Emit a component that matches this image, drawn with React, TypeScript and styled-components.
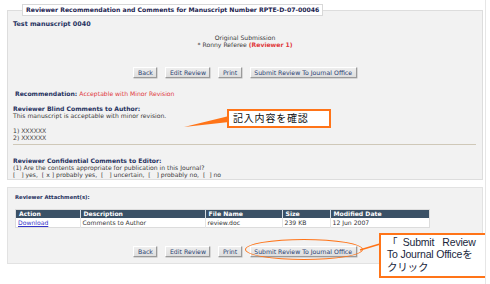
import React from "react";
import styled, { createGlobalStyle } from "styled-components";

const GlobalStyle = createGlobalStyle`
  html, body {
    margin: 0;
    padding: 0;
    background: #ffffff;
  }
  body {
    font-family: "DejaVu Sans", Verdana, sans-serif;
    color: #333333;
  }
`;

const Page = styled.div`
  position: relative;
  width: 485px;
  height: 284px;
  overflow: hidden;
  border-right: 1px solid #e6e6e6;
`;

const Panel = styled.fieldset`
  box-sizing: border-box;
  width: 476px;
  margin: 4px 0 0 7px;
  padding: 0 5px 1.5px 5px;
  border: 1px solid #dddddd;
  background: #f2f2f2;
  min-inline-size: auto;
`;

const Legend = styled.legend`
  margin-left: 9px;
  padding: 0 3px;
  border: 1px solid #d8d8d8;
  background: #ffffff;
  font-size: 6.15px;
  font-weight: bold;
  line-height: 10px;
  color: #1c2450;
`;

const Box = styled.div`
  box-sizing: border-box;
  width: 476px;
  margin: 7px 0 0 7px;
  padding: 5.5px 7px 6px 7px;
  border: 1px solid #e2e2e2;
  background: #f2f2f2;
`;

const Heading = styled.div<{ $top?: number; $indent?: number; $size?: number }>`
  margin-top: ${(p) => p.$top ?? 0}px;
  padding-left: ${(p) => p.$indent ?? 0}px;
  font-size: ${(p) => p.$size ?? 6.1}px;
  font-weight: bold;
  line-height: 7px;
  color: #1f3160;
  white-space: nowrap;
`;

const Text = styled.div<{ $top?: number; $center?: boolean }>`
  margin-top: ${(p) => p.$top ?? 0}px;
  font-size: 6.1px;
  line-height: 7px;
  color: #3a3a3a;
  text-align: ${(p) => (p.$center ? "center" : "left")};
  white-space: pre;
`;

const Red = styled.span`
  color: #e0383c;
  font-weight: normal;
`;

const RedBold = styled.span`
  color: #e0383c;
  font-weight: bold;
`;

const ButtonRow = styled.div<{ $top: number }>`
  display: flex;
  justify-content: center;
  gap: 8px;
  margin-top: ${(p) => p.$top}px;
`;

const Button = styled.button`
  box-sizing: border-box;
  height: 11px;
  padding: 0 3.5px;
  margin: 0;
  font-family: "DejaVu Sans", Verdana, sans-serif;
  font-size: 6.2px;
  line-height: 9px;
  color: #2b3f72;
  background: linear-gradient(#eeeeee, #dedede);
  border: 1px solid;
  border-color: #ffffff #9a9a9a #9a9a9a #ffffff;
  box-shadow: 0.5px 0.5px 0 #b8b8b8;
  white-space: nowrap;
`;

const Rule = styled.div`
  margin: 3.5px 1px 0 0;
  height: 1px;
  background: #cfc8b8;
`;

const Table = styled.table`
  margin-top: 8.5px;
  width: 415px;
  border-collapse: collapse;
  border: 1px solid #dcdcdc;
  font-size: 6.1px;
`;

const Th = styled.th<{ $w: number }>`
  width: ${(p) => p.$w}px;
  height: 8px;
  padding: 0 3px;
  background: #3b5166;
  color: #ffffff;
  font-weight: bold;
  text-align: left;
  line-height: 8px;
  border-left: 1px solid #d6dde4;
  &:first-child {
    border-left: none;
  }
`;

const Td = styled.td`
  height: 9px;
  padding: 0 2px;
  background: #ffffff;
  color: #333333;
  line-height: 9px;
  border-left: 1px solid #e4e4e4;
  &:first-child {
    border-left: none;
  }
`;

const Link = styled.a`
  color: #3434c8;
  text-decoration: underline;
`;

const Callout = styled.div<{ $x: number; $y: number; $w: number; $h: number }>`
  position: absolute;
  left: ${(p) => p.$x}px;
  top: ${(p) => p.$y}px;
  width: ${(p) => p.$w}px;
  height: ${(p) => p.$h}px;
  box-sizing: border-box;
  border: 2px solid #ff7418;
  background: #ffffff;
  color: #111111;
`;

const CheckNote = styled.div`
  padding-left: 4px;
  font-family: "Noto Sans CJK JP", sans-serif;
  font-size: 10px;
  letter-spacing: 0.8px;
  line-height: 14px;
`;

const ClickNote = styled.div`
  padding: 1px 0 0 6px;
  font-family: "Liberation Sans", "Noto Sans CJK JP", sans-serif;
  font-size: 10.5px;
  line-height: 12.3px;
  color: #1a1f3c;
  letter-spacing: -0.2px;
  white-space: pre;
`;

const Ring = styled.div`
  position: absolute;
  left: 245px;
  top: 239px;
  width: 118px;
  height: 21px;
  box-sizing: border-box;
  border: 1.5px solid #ff7418;
  border-radius: 50% / 50%;
`;

const Overlay = styled.svg`
  position: absolute;
  left: 0;
  top: 0;
  pointer-events: none;
`;

export default function App() {
  return (
    <>
      <GlobalStyle />
      <Page>
        <Panel>
          <Legend>Reviewer Recommendation and Comments for Manuscript Number RPTE-D-07-00046</Legend>
          <Heading $top={5} $size={6.4}>
            Test manuscript 0040
          </Heading>
          <Text $top={6} $center>
            Original Submission
          </Text>
          <Text $center>
            * Ronny Referee <RedBold>(Reviewer 1)</RedBold>
          </Text>
          <ButtonRow $top={19}>
            <Button>Back</Button>
            <Button>Edit Review</Button>
            <Button>Print</Button>
            <Button>Submit Review To Journal Office</Button>
          </ButtonRow>
          <Heading $top={12} $indent={2}>
            Recommendation: <Red>Acceptable with Minor Revision</Red>
          </Heading>
          <Heading $top={8}>Reviewer Blind Comments to Author:</Heading>
          <Text>This manuscript is acceptable with minor revision.</Text>
          <Text $top={7.5}>1) XXXXXX</Text>
          <Text>2) XXXXXX</Text>
          <Rule />
          <Heading $top={11.5}>Reviewer Confidential Comments to Editor:</Heading>
          <Text>(1) Are the contents appropriate for publication in this Journal?</Text>
          <Text>[   ] yes,  [ x ] probably yes,  [   ] uncertain,  [   ] probably no,  [  ] no</Text>
        </Panel>

        <Box>
          <Heading $size={5.3}>Reviewer Attachment(s):</Heading>
          <Table>
            <thead>
              <tr>
                <Th $w={62}>Action</Th>
                <Th $w={130}>Description</Th>
                <Th $w={76}>File Name</Th>
                <Th $w={45}>Size</Th>
                <Th $w={102}>Modified Date</Th>
              </tr>
            </thead>
            <tbody>
              <tr>
                <Td>
                  <Link href="#">Download</Link>
                </Td>
                <Td>Comments to Author</Td>
                <Td>review.doc</Td>
                <Td>239 KB</Td>
                <Td>12 Jun 2007</Td>
              </tr>
            </tbody>
          </Table>
          <ButtonRow $top={18}>
            <Button>Back</Button>
            <Button>Edit Review</Button>
            <Button>Print</Button>
            <Button>Submit Review To Journal Office</Button>
          </ButtonRow>
        </Box>

        <Overlay width="490" height="284" viewBox="0 0 490 284">
          <polygon points="229,116 229,122 184,127" fill="#ff7418" />
          <line x1="360" y1="250" x2="380" y2="244" stroke="#ff7418" strokeWidth="1.5" />
        </Overlay>

        <Callout $x={227} $y={109} $w={104} $h={19}>
          <CheckNote>記入内容を確認</CheckNote>
        </Callout>

        <Ring />

        <Callout $x={379} $y={233} $w={108} $h={45}>
          <ClickNote>
            {"「  Submit   Review\nTo Journal Officeを\nクリック"}
          </ClickNote>
        </Callout>
      </Page>
    </>
  );
}
